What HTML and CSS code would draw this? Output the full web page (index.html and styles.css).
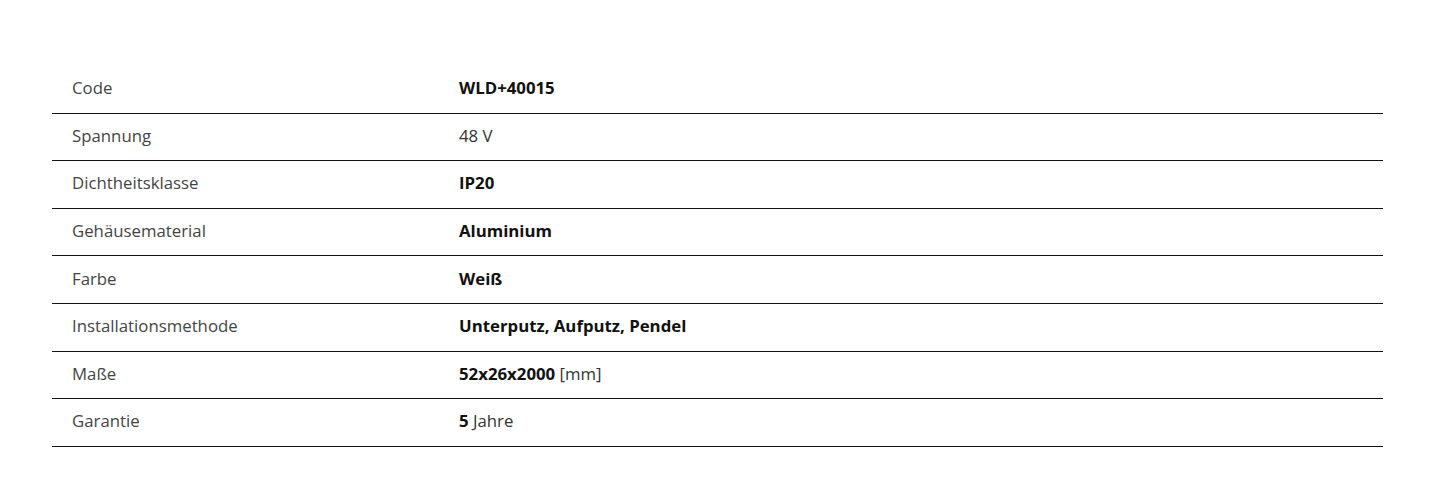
FILE: index.html
```html
<!DOCTYPE html>
<html lang="de">
<head>
<meta charset="utf-8">
<title>Technische Daten</title>
<link rel="stylesheet" href="styles.css">
</head>
<body>
<div class="specs">
  <div class="row"><div class="label">Code</div><div class="value"><b>WLD+40015</b></div></div>
  <div class="row"><div class="label">Spannung</div><div class="value">48 V</div></div>
  <div class="row"><div class="label">Dichtheitsklasse</div><div class="value"><b>IP20</b></div></div>
  <div class="row"><div class="label">Gehäusematerial</div><div class="value"><b>Aluminium</b></div></div>
  <div class="row"><div class="label">Farbe</div><div class="value"><b>Weiß</b></div></div>
  <div class="row"><div class="label">Installationsmethode</div><div class="value"><b>Unterputz, Aufputz, Pendel</b></div></div>
  <div class="row"><div class="label">Maße</div><div class="value"><b>52x26x2000</b> [mm]</div></div>
  <div class="row"><div class="label">Garantie</div><div class="value"><b>5</b> Jahre</div></div>
</div>
</body>
</html>
```
FILE: styles.css
```css
html, body {
  margin: 0;
  padding: 0;
  background: #fff;
}
body {
  font-family: "Open Sans", "Noto Sans", sans-serif;
  font-size: 16.8px;
  color: #222;
}
.specs {
  margin: 66px 0 0 52px;
  width: 1331px;
}
.row {
  display: grid;
  grid-template-columns: 407px 1fr;
  height: 47.6px;
  box-sizing: border-box;
  padding-bottom: 3px;
  border-bottom: 1.6px solid #111;
  align-items: center;
}
.label {
  padding-left: 20px;
  color: #444;
}
.value {
  color: #333;
}
.value b {
  font-weight: 700;
  color: #111;
}
```
